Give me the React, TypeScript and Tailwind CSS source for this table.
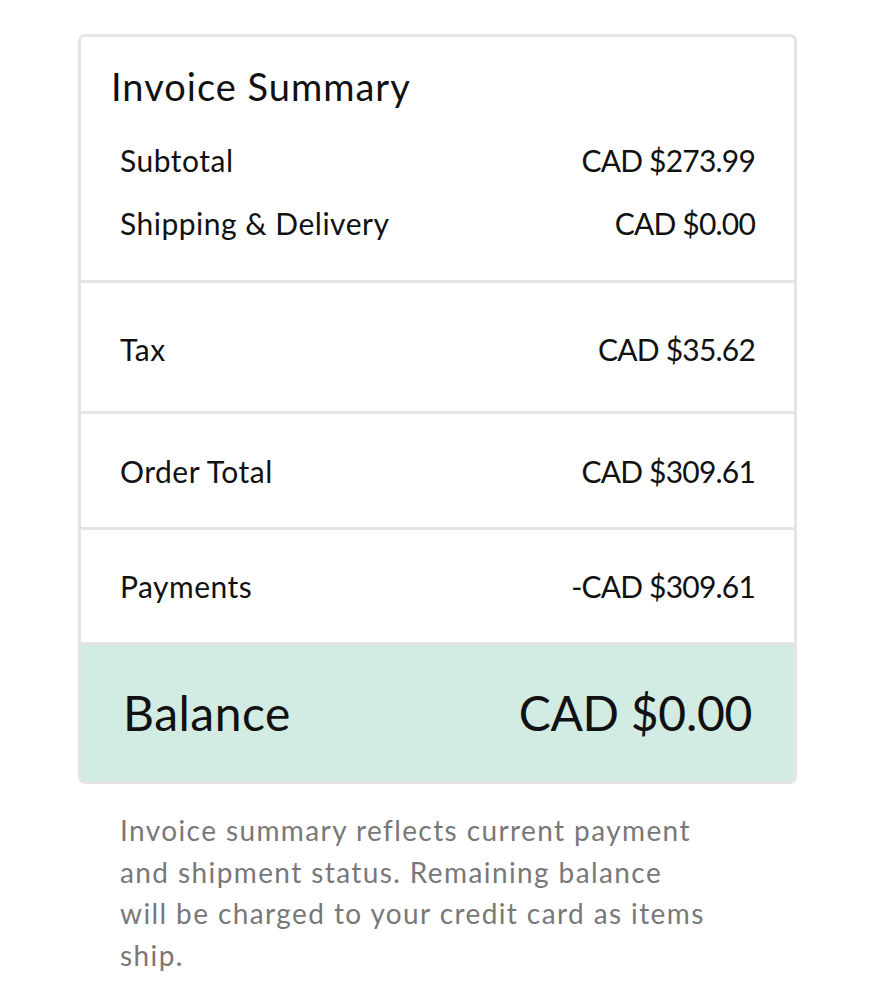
const rows = [
  { label: "Tax", value: "CAD $35.62", h: "h-[131px] pt-[4px]" },
  { label: "Order Total", value: "CAD $309.61", h: "h-[116px]" },
  { label: "Payments", value: "-CAD $309.61", h: "h-[115px] border-b-0" },
];

export default function App() {
  return (
    <div className="min-h-screen bg-white font-['Lato',sans-serif] text-[#111]">
      <div className="pt-[34px] pl-[78px] w-[797px]">
        {/* CARD */}
        <div className="border-[3px] border-[#e4e4e4] rounded-[7px] overflow-hidden">
          <div className="h-[246px] pt-[24px] border-b-[3px] border-[#e4e4e4]">
            <h2 className="pl-[30px] text-[38px] leading-[50px] tracking-[1px]">Invoice Summary</h2>
            <div className="px-[39px] mt-[29px] space-y-[23px] text-[30px] leading-[40px]">
              <div className="flex justify-between">
                <span className="tracking-[0.5px]">Subtotal</span>
                <span className="tracking-[-0.8px]">CAD $273.99</span>
              </div>
              <div className="flex justify-between">
                <span className="tracking-[0.5px]">Shipping &amp; Delivery</span>
                <span className="tracking-[-0.8px]">CAD $0.00</span>
              </div>
            </div>
          </div>

          {rows.map((row) => (
            <div
              key={row.label}
              className={`${row.h} px-[39px] flex items-center justify-between border-b-[3px] border-[#e4e4e4] text-[30px] leading-[40px]`}
            >
              <span className="tracking-[0.5px]">{row.label}</span>
              <span className="tracking-[-0.8px]">{row.value}</span>
            </div>
          ))}

          <div className="h-[136px] bg-[#d2ebe3] px-[42px] flex items-center justify-between text-[48px] leading-[56px]">
            <span className="tracking-[0.5px]">Balance</span>
            <span className="tracking-[-0.3px]">CAD $0.00</span>
          </div>
        </div>

        <p className="pl-[42px] mt-[26px] text-[28px] leading-[41.7px] tracking-[1.4px] text-[#787878] whitespace-nowrap">
          Invoice summary reflects current payment
          <br />
          and shipment status. Remaining balance
          <br />
          will be charged to your credit card as items
          <br />
          ship.
        </p>
      </div>
    </div>
  );
}
